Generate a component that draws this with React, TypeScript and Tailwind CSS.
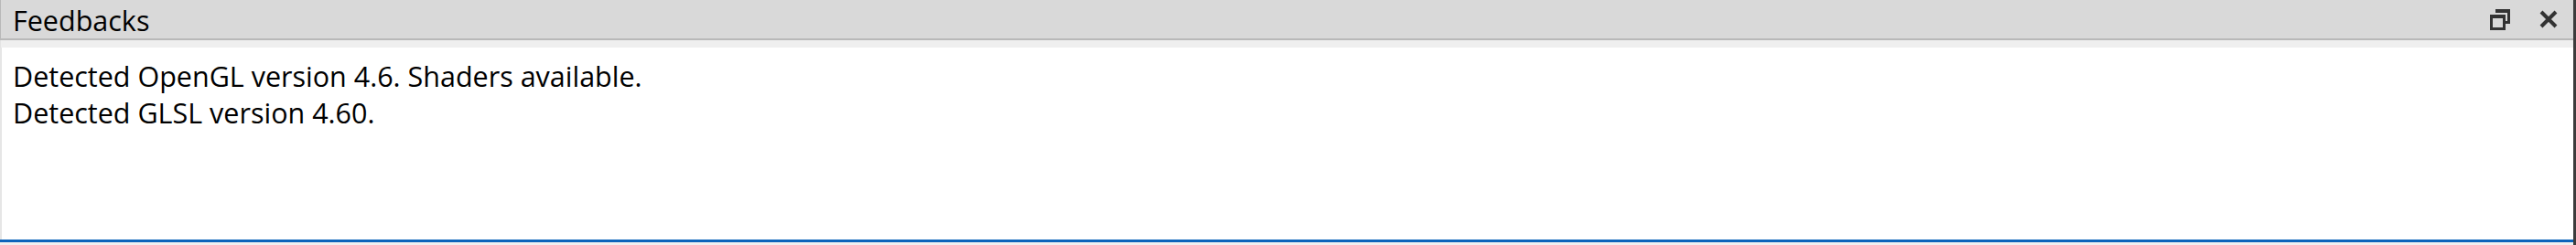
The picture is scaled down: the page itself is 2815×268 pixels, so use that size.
import React from "react";

const RestoreIcon: React.FC = () => (
  <svg width="22" height="23" viewBox="0 0 22 23" fill="none">
    <path d="M6 1.5h14.5v13h-4" stroke="#333" strokeWidth="3" />
    <rect x="6" y="0" width="16" height="4" fill="#333" />
    <rect x="1.5" y="7.5" width="14" height="14" stroke="#333" strokeWidth="3" />
    <rect x="0" y="6" width="17" height="4" fill="#333" />
  </svg>
);

const CloseIcon: React.FC = () => (
  <svg width="20" height="20" viewBox="0 0 20 20">
    <path d="M2 2L18 18M18 2L2 18" stroke="#333" strokeWidth="4" />
  </svg>
);

const lines = [
  "Detected OpenGL version 4.6. Shaders available.",
  "Detected GLSL version 4.60.",
];

export default function App() {
  return (
    <div
      className="flex h-[268px] w-full border-r-[3px] border-[#3c3c3c] bg-[#f0f0f0]"
      style={{ fontFamily: '"Open Sans", "Noto Sans", sans-serif' }}
    >
      <div className="flex min-w-0 flex-1 flex-col">
        <div className="flex h-[44px] items-center border-b-2 border-l border-[#b9b9b9] bg-[#d9d9d9] pl-[13px] pr-[17px]">
          <span className="pt-[2px] text-[30.5px] leading-none text-black">Feedbacks</span>
          <div className="ml-auto flex items-center gap-[32px]">
            <RestoreIcon />
            <CloseIcon />
          </div>
        </div>
        <div className="h-[8px] border-l border-[#e3e3e3] bg-[#efefef]" />
        <div className="flex-1 border-l-2 border-[#e6e6e6] bg-white pl-[12px] pt-[11px]">
          {lines.map((line, i) => (
            <div key={i} className="text-[30.5px] leading-[40px] text-black">
              {line}
            </div>
          ))}
        </div>
        <div className="h-[3px] bg-[#0c64bb]" />
        <div className="h-[3px] bg-[#f0f0f0]" />
      </div>
    </div>
  );
}
